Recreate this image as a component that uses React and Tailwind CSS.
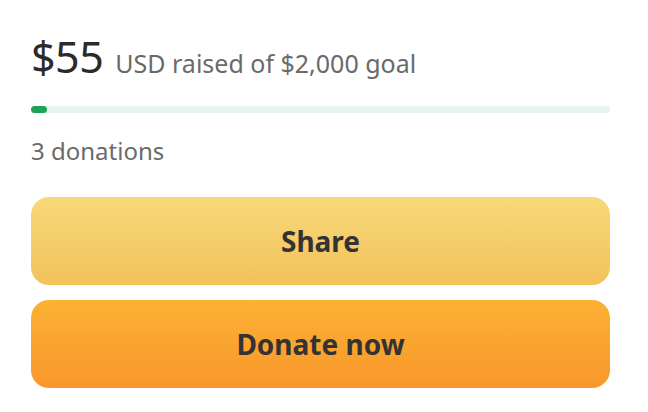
export default function App() {
  const raised = 55;
  const goal = 2000;
  const pct = Math.max(2.6, (raised / goal) * 100);

  return (
    <div className="w-[648px] h-[412px] bg-white font-['Noto_Sans',sans-serif] overflow-hidden">
      <div className="pl-[31px] pr-[38px] pt-[35px]">
        <div className="flex items-baseline gap-[12px]">
          <span className="text-[43px] leading-none text-[#2b2b2b] tracking-[-0.5px]">$55</span>
          <span className="text-[25px] leading-none text-[#6a6a6a]">USD raised of $2,000 goal</span>
        </div>
        <div className="mt-[28px] h-[7px] rounded-full bg-[#e5f4ee]">
          <div className="h-full rounded-full bg-[#1ea35b]" style={{ width: pct + "%" }} />
        </div>
        <div className="mt-[26px] text-[24px] leading-none text-[#6a6a6a]">3 donations</div>
        <div className="mt-[34px] flex flex-col gap-[15px]">
          <button className="h-[88px] rounded-[18px] bg-gradient-to-b from-[#f8d878] to-[#f2c25b] text-[28px] font-bold text-[#333]">
            Share
          </button>
          <button className="h-[88px] rounded-[18px] bg-gradient-to-b from-[#fbb134] to-[#f8972b] text-[28px] font-bold text-[#333]">
            Donate now
          </button>
        </div>
      </div>
    </div>
  );
}
